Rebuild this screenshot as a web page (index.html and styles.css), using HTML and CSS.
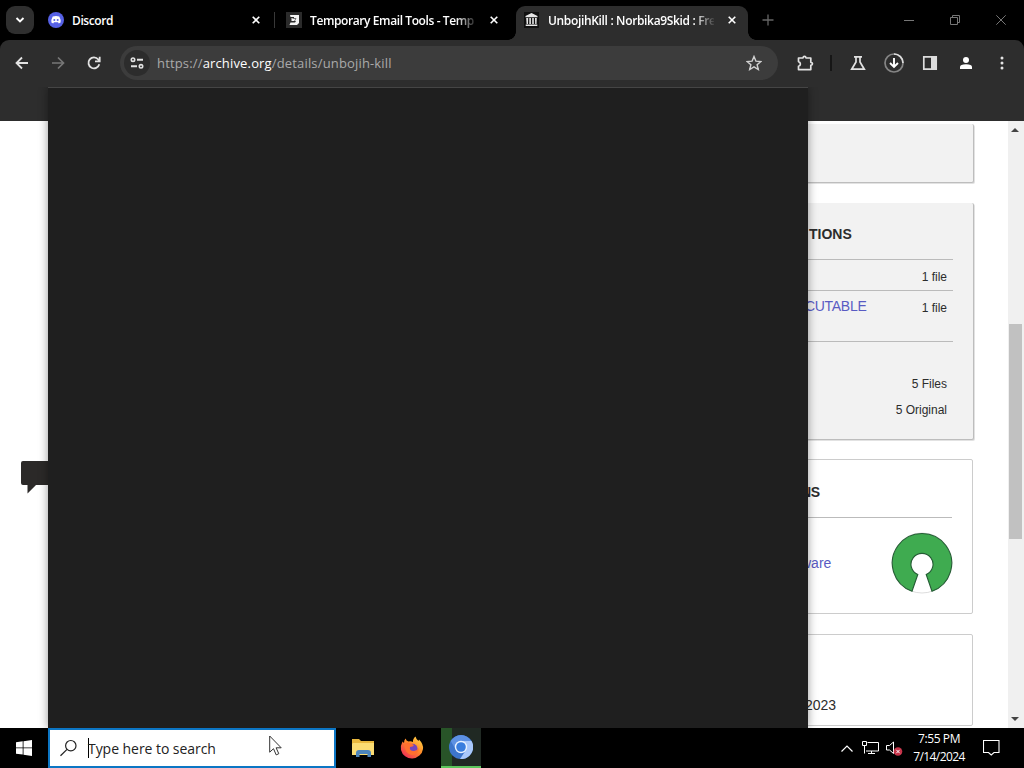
FILE: index.html
```html
<!DOCTYPE html>
<html lang="en">
<head>
<meta charset="utf-8">
<title>UnbojihKill : Norbika9Skid</title>
<link rel="stylesheet" href="styles.css">
</head>
<body>
<div class="desktop">
  <header class="tabstrip">
    <button class="tab-search"><svg width="10" height="6" viewBox="0 0 10 6" class="stroke white"><path d="M1.500 1l3.500 3.500L8.500 1" stroke-width="1.900"/></svg></button>
    <div class="tab tab-discord">
      <svg class="favicon" width="16" height="16" viewBox="0 0 16 16"><circle cx="8" cy="8" r="8" fill="#5661e6"/><path d="M4.700 4.500Q8 3.400 11.300 4.500Q13 7.500 12.600 10.600L10.800 11.500L10 10.300H6L5.200 11.500L3.400 10.600Q3 7.500 4.700 4.500z" fill="#fff"/><circle cx="6.300" cy="8" r="1" fill="#5661e6"/><circle cx="9.700" cy="8" r="1" fill="#5661e6"/></svg>
      <span class="tab-title t1">Discord</span>
      <svg class="close stroke white" width="8" height="8" viewBox="0 0 8 8"><path d="M.7.7l6.600 6.600M7.300.7L.7 7.300" stroke-width="1.600"/></svg>
    </div>
    <i class="tab-divider"></i>
    <div class="tab tab-mail">
      <svg class="favicon" width="16" height="16" viewBox="0 0 16 16"><path d="M0 0h16v16H0z" fill="#2b2b2b"/><path d="M4 3h9v8l-2 2H3.500l1-2.500H9L10 9H5.500V6H8V5H4.500z" fill="#f4f4f4"/><path d="M6.500 6.500H10L8.500 9" fill="none" stroke="#555" stroke-width=".8"/></svg>
      <span class="tab-title t2">Temporary Email Tools - Temp</span>
      <svg class="close stroke white" width="8" height="8" viewBox="0 0 8 8"><path d="M.7.7l6.600 6.600M7.300.7L.7 7.300" stroke-width="1.600"/></svg>
    </div>
    <div class="tab tab-active">
      <svg class="favicon" width="16" height="16" viewBox="0 0 16 16"><path d="M0 0h15v16H0z" fill="#111"/><path d="M1.500 4L7.500 1l6 3v1.200h-12zM2.200 6h2l-.2 6H2.600zM5.300 6h1.600v6H5.300zM8.200 6h1.600v6H8.200zM11 6h1.800l-.3 6h-1.300zM1.700 12.600h11.600V14H1.700z" fill="#e5e5e5"/></svg>
      <span class="tab-title t3">UnbojihKill : Norbika9Skid : Fre</span>
      <svg class="close stroke white" width="8" height="8" viewBox="0 0 8 8"><path d="M.7.7l6.600 6.600M7.300.7L.7 7.300" stroke-width="1.600"/></svg>
    </div>
    <svg class="new-tab stroke" width="12" height="12" viewBox="0 0 12 12"><path d="M6 .5v11M.5 6h11" stroke="#666" stroke-width="1.300"/></svg>
    <div class="window-buttons">
      <svg class="stroke" width="10" height="10" viewBox="0 0 10 10"><path d="M0 5.500h10" stroke="#777"/></svg>
      <svg class="stroke" width="10" height="10" viewBox="0 0 10 10"><path d="M.5 2.500h7v7h-7zM2.500 2.500v-2h7v7h-2" stroke="#777"/></svg>
      <svg class="stroke" width="10" height="10" viewBox="0 0 10 10"><path d="M.3.300l9.400 9.400M9.700.3L.3 9.700" stroke="#777"/></svg>
    </div>
  </header>
  <nav class="toolbar">
    <svg class="stroke light" width="14" height="14" viewBox="0 0 14 14"><path d="M13 7H2M7 1.500L1.500 7 7 12.500" stroke-width="1.800"/></svg>
    <svg class="stroke dim" width="14" height="14" viewBox="0 0 14 14"><path d="M1 7h11M7 1.500L12.500 7 7 12.500" stroke-width="1.700"/></svg>
    <svg class="stroke light" width="14" height="14" viewBox="0 0 14 14"><path d="M12.300 8.300A5.500 5.500 0 1 1 11.300 3.500L12.500 5M12.700.7V5.300H8" stroke-width="1.800"/></svg>
    <div class="omnibox">
      <span class="site-info"><svg class="stroke light" width="14" height="12" viewBox="0 0 14 12"><circle cx="3" cy="2.700" r="1.700" stroke-width="1.600"/><path d="M7 2.700h6M1 9.300h6" stroke-width="1.900"/><circle cx="11" cy="9.300" r="1.700" stroke-width="1.600"/></svg></span>
      <span class="url">https://<b>archive.org</b>/details/unbojih-kill</span>
      <svg class="star stroke" width="16" height="16" viewBox="0 0 16 16"><path d="M8 1.500l1.900 4.600 5 .4-3.800 3.200 1.200 4.800L8 11.900l-4.300 2.600 1.200-4.800L1.100 6.500l5-.4z" stroke="#d0d0d0" stroke-width="1.400"/></svg>
    </div>
    <div class="actions">
      <svg class="puzzle stroke light" width="18" height="18" viewBox="0 0 18 18"><path d="M2.500 4H7Q7.200 2.300 8.500 2.300T10 4H14.800V8.300Q16.500 8.600 16.500 9.800T14.800 11.300V15.600H2.500V12.200Q4.400 11.600 4.400 9.900T2.500 7.600z" stroke-width="1.700" stroke-linejoin="round"/></svg>
      <i class="sep"></i>
      <span class="action"><svg class="stroke light" width="16" height="16" viewBox="0 0 16 16"><path d="M4 1.800h8M6 2v5L1.700 14.200h12.600L10 7V2" stroke-width="1.700"/></svg></span>
      <span class="action"><svg class="stroke" width="20" height="20" viewBox="0 0 20 20"><circle cx="10" cy="10" r="9" stroke="#858585" stroke-width="1.700"/><path d="M10 1a9 9 0 0 1 9 9" stroke="#ddd" stroke-width="1.700"/><path d="M10 5v9M6 10l4 4 4-4" stroke="#fff" stroke-width="1.900"/></svg></span>
      <span class="action"><svg width="16" height="16" viewBox="0 0 16 16"><path d="M1.800 1.800h12.400v12.400H1.800z" fill="none" stroke="#ddd" stroke-width="1.700"/><path d="M9 1h6v14H9z" fill="#ddd"/></svg></span>
      <span class="action"><svg width="14" height="14" viewBox="0 0 14 14" fill="#fff"><circle cx="7" cy="4" r="3"/><path d="M1 13v-2Q1 8.300 7 8.300T13 11v2z"/></svg></span>
      <span class="action"><svg width="4" height="16" viewBox="0 0 4 16" fill="#e4e4e4"><circle cx="2" cy="3" r="1.500"/><circle cx="2" cy="8" r="1.500"/><circle cx="2" cy="13" r="1.500"/></svg></span>
    </div>
  </nav>
  <div class="bookmark-bar"></div>
  <main class="page">
    <svg class="bubble" width="44" height="34" viewBox="0 0 44 34"><path d="M2 0h42v24H15L6.500 32.500V24H2Q0 24 0 22V2Q0 0 2 0z" fill="#2b2928"/></svg>
    <aside class="details">
      <section class="card gray card-top"></section>
      <section class="card gray card-options">
        <h2>TIONS</h2>
        <div class="row r1"><span>1 file</span></div>
        <div class="row r2"><a>CUTABLE</a><span>1 file</span></div>
        <div class="row r3"><span>5 Files</span></div>
        <div class="row r4"><span>5 Original</span></div>
      </section>
      <section class="card card-collections">
        <h2>NS</h2>
        <div class="collection"><a>ware</a>
          <svg width="62" height="62" viewBox="0 0 62 62"><path d="M31 1a30 30 0 1 1 0 60 30 30 0 0 1 0-60" fill="#fff" stroke="#ddd"/><path d="M21 59.200A29.700 29.700 0 1 1 41 59.200L35.200 42.500A11 11 0 1 0 26.800 42.500z" fill="#3fab50" stroke="#255d35" stroke-width="1.100"/></svg>
        </div>
      </section>
      <section class="card card-date"><span>2023</span></section>
    </aside>
    <div class="scrollbar">
      <svg width="8" height="4" viewBox="0 0 8 4"><path d="M0 4l4-4 4 4z" fill="#444"/></svg>
      <i class="thumb"></i>
      <svg width="8" height="4" viewBox="0 0 8 4"><path d="M0 0l4 4 4-4z" fill="#444"/></svg>
    </div>
  </main>
  <footer class="taskbar">
    <div class="start"><svg width="16" height="16" viewBox="0 0 16 16" fill="#fff"><path d="M0 2.300l6.700-1v6.200H0zM7.500 1.200L16 0v7.500H7.500zM0 8.300h6.700v6.300L0 13.700zM7.500 8.300H16V16l-8.500-1.200z"/></svg></div>
    <div class="search">
      <svg class="stroke" width="18" height="18" viewBox="0 0 18 18"><circle cx="10.800" cy="6.700" r="5.200" stroke="#222" stroke-width="1.200"/><path d="M7 10.400L.5 16.700" stroke="#222" stroke-width="1.200"/></svg>
      <i class="caret"></i><span>Type here to search</span>
    </div>
    <div class="task explorer"><svg width="22" height="18" viewBox="0 0 22 18"><path d="M0 0h7l2 2h13v14H0z" fill="#e9b83e"/><path d="M1 4h21v12H0V5z" fill="#fbdc73"/><path d="M4 18v-4q0-3 3-3h9q3 0 3 3v4h-3.500v-3h-8v3z" fill="#4c84bb"/></svg></div>
    <div class="task firefox"><svg width="24" height="24" viewBox="0 0 24 24"><defs><linearGradient id="fire" x1="1" y1="0" x2=".2" y2="1"><stop offset="0" stop-color="#ffe34b"/><stop offset=".5" stop-color="#ff8a29"/><stop offset="1" stop-color="#f02b58"/></linearGradient></defs><path d="M2.500 5.500L4 7Q4 3.500 5.700 2.500Q6 4.800 8.500 5.500Q11 5 13 6Q12.500 3 15.500.5Q16 3 18.500 5L19 3.500Q23.500 8 23 13A11.200 11 0 0 1 1 14Q.3 9.500 2.500 5.500z" fill="url(#fire)"/><circle cx="12.500" cy="12.800" r="5" fill="#7446bd"/><path d="M4 8q4-3 8 0l2 1q-1 2-4 2-1 4 4 4 3 0 5-3-1 7-7 7-7-1-8-11" fill="#ff702f"/></svg></div>
    <div class="task chromium"><svg width="24" height="24" viewBox="0 0 24 24"><circle cx="12" cy="12" r="12" fill="#3d75cb"/><path d="M12 6h10.500A12 12 0 0 1 11 24l6-9z" fill="#a9c8fb"/><path d="M1.700 6A12 12 0 0 1 22.400 6H12L7 15z" fill="#5d91e3"/><circle cx="12" cy="12" r="6.200" fill="#e9f2ff"/><circle cx="12" cy="12" r="4.800" fill="#397dde"/></svg></div>
    <div class="tray">
      <svg class="stroke white" width="12" height="7" viewBox="0 0 12 7"><path d="M.5 6.500L6 1l5.500 5.500" stroke-width="1.200"/></svg>
      <svg class="stroke white" width="17" height="14" viewBox="0 0 17 14"><path d="M5.500 1.500h11v8.500H4M.5.500h4v4h-4zM2.500 4.500v8M6 12.500h7M9.500 10v2.500"/></svg>
      <svg width="17" height="15" viewBox="0 0 17 15"><path d="M.5 4.500h3l4-3.500v11.500L3.500 9h-3z" fill="none" stroke="#fff"/><circle cx="12" cy="10.500" r="4.300" fill="#c73349"/><path d="M10.300 8.800l3.400 3.400M13.700 8.800l-3.400 3.400" stroke="#fff"/></svg>
      <div class="clock"><span>7:55 PM</span><span>7/14/2024</span></div>
      <svg class="stroke white" width="17" height="16" viewBox="0 0 17 16"><path d="M.5.5h15.500v12H11L8.250 15 5.500 12.500h-5z" stroke-width="1.100"/></svg>
    </div>
  </footer>
  <div class="search-panel"></div>
  <svg class="cursor" width="13" height="21" viewBox="0 0 13 21"><path d="M.7 1v16.200l3.800-3.500 2.700 6.200 2.600-1.200-2.700-5.900h5.100z" fill="#fff" stroke="#333"/></svg>
</div>
</body>
</html>
```

FILE: styles.css
```css
* { box-sizing: border-box; }
body { margin: 0; background: #000; overflow: hidden; }
svg { display: block; flex: none; }
button { padding: 0; border: 0; }
.desktop { position: relative; width: 1024px; height: 768px; display: flex; flex-direction: column; overflow: hidden; font-family: "Open Sans", "Noto Sans", sans-serif; }
.stroke { fill: none; }
.white { stroke: #fff; }
.light { stroke: #e2e2e2; }
.dim { stroke: #777; }
.tabstrip { height: 40px; flex: none; display: flex; align-items: center; padding-left: 6px; background: #000; }
.tab-search { width: 28px; height: 28px; display: flex; align-items: center; justify-content: center; background: #2f2f2f; border-radius: 9px; }
.tab { height: 34px; margin-top: 6px; display: flex; align-items: center; padding-bottom: 6px; color: #fff; }
.tab-discord { width: 240px; padding-left: 14px; padding-right: 14px; }
.tab-divider { width: 1px; height: 16px; background: #383838; }
.tab-mail { width: 241px; padding: 0 18px 6px 11px; }
.tab-active { position: relative; width: 232px; padding: 0 12px 6px 8px; background: #2d2d2d; border-radius: 9px 9px 0 0; }
.tab-active::before, .tab-active::after { content: ""; position: absolute; bottom: 0; width: 8px; height: 8px; }
.tab-active::before { left: -8px; background: radial-gradient(circle at 0 0, #000 7.500px, #2d2d2d 8px); }
.tab-active::after { right: -8px; background: radial-gradient(circle at 100% 0, #000 7.500px, #2d2d2d 8px); }
.tab-title { margin-left: 8px; white-space: nowrap; font-size: 12px; font-weight: 600; }
.t1 { letter-spacing: -.4px; }
.t2, .t3 { width: 166px; -webkit-mask-image: linear-gradient(90deg, #000 146px, transparent 168px); }
.t2 { letter-spacing: -.4px; }
.t3 { letter-spacing: -.34px; }
.close { margin-left: auto; }
.new-tab { margin-left: 14px; }
.window-buttons { margin-left: auto; margin-right: 18px; display: flex; gap: 36px; }
.toolbar { height: 46px; flex: none; display: flex; align-items: center; padding-left: 15px; gap: 22px; background: #2d2d2d; border-radius: 9px 9px 0 0; }
.omnibox { width: 658px; height: 34px; display: flex; align-items: center; margin-left: -3px; padding: 0 16px 0 4px; background: #3c3c3c; border-radius: 17px; }
.site-info { width: 26px; height: 26px; display: flex; align-items: center; justify-content: center; background: #2c2c2c; border-radius: 50%; }
.url { margin-left: 7px; color: #aaa; font-size: 13px; letter-spacing: .16px; white-space: nowrap; }
.url b { color: #fff; font-weight: 400; }
.star { margin-left: auto; }
.actions { flex: 1; display: flex; align-items: center; margin-left: -4px; }
.puzzle { margin-right: 16px; }
.sep { width: 2px; height: 16px; margin-right: 8px; background: #161616; }
.action { width: 36px; display: flex; justify-content: center; }
.bookmark-bar { height: 35px; flex: none; background: #2d2d2d; }
.page { height: 607px; flex: none; display: flex; background: #fff; font-family: "Liberation Sans", Arial, sans-serif; }
.bubble { margin: 340px 0 0 21px; }
.details { width: 174px; margin-left: auto; }
.card { width: 173px; margin-bottom: 20px; padding-right: 20px; border: 1px solid #ccc; border-radius: 2px; overflow: hidden; color: #2c2c2c; }
.gray { width: 174px; padding-right: 20px; background: #f2f2f2; border: 0; border-right: 1px solid #bdbdbd; border-bottom: 1px solid #bdbdbd; box-shadow: 1px 1px 0 #e2e2e2; }
.card-top { height: 59px; margin-top: 3px; }
.card-options { height: 237px; margin-bottom: 19px; }
.card-collections { height: 155px; }
.card-date { height: 92px; margin: 0; }
h2 { margin: 0; height: 57px; padding: 23px 0 0 9px; border-bottom: 1px solid #bbb; font-size: 14px; line-height: 17px; letter-spacing: 0; }
.card-collections h2 { height: 58px; padding: 24px 0 0; letter-spacing: -.3px; }
.row { display: flex; justify-content: space-between; padding: 0 6px 0 5px; font-size: 12px; line-height: 14px; }
.row span { margin-left: auto; }
a { color: #595bc3; font-size: 14px; }
.r1 { height: 31px; padding-top: 10px; border-bottom: 1px solid #bbb; }
.r2 { height: 51px; padding-top: 9px; border-bottom: 1px solid #bbb; }
.r2 a { line-height: 13px; letter-spacing: -.3px; }
.r2 span { padding-top: 1px; }
.r3 { padding-top: 35px; }
.r4 { padding-top: 12px; }
.collection { height: 89px; display: flex; align-items: center; justify-content: space-between; margin-right: -1px; }
.card-date span { display: block; padding: 62px 0 0 4px; font-size: 14px; line-height: 16px; }
.scrollbar { width: 16px; margin-left: 34px; padding: 7px 2px 7px 0; display: flex; flex-direction: column; align-items: center; background: #f0f0f0; }
.thumb { width: 13px; height: 215px; margin: 192px 0 auto; background: #c1c1c1; }
.taskbar { height: 40px; flex: none; display: flex; align-items: center; background: #000; color: #fff; }
.start { width: 48px; padding-left: 16px; }
.search { width: 288px; height: 40px; display: flex; align-items: center; padding-left: 10px; background: #fff; border: 2px solid #0c76c4; color: #222; font-size: 14px; letter-spacing: -.05px; white-space: nowrap; }
.caret { width: 1px; height: 20px; margin-left: 10px; background: #000; }
.search span { margin-left: -1px; }
.task { width: 40px; height: 40px; display: flex; align-items: center; justify-content: center; }
.explorer { margin-left: 7px; }
.firefox { margin: 0 9px; }
.chromium { border-bottom: 2px solid #5cc65c; background: linear-gradient(90deg, #285428 11px, #202923 11px); }
.tray { margin-left: auto; margin-right: 24px; display: flex; align-items: center; }
.tray > svg:nth-child(2) { margin-left: 9px; }
.tray > svg:nth-child(3) { margin-left: 7px; }
.clock { width: 56px; margin: 0 16px 0 8px; display: flex; flex-direction: column; align-items: center; font-size: 12px; line-height: 18px; letter-spacing: -.6px; white-space: nowrap; }
.clock span:first-child { letter-spacing: -.4px; }
.search-panel { position: absolute; left: 48px; top: 87px; width: 760px; height: 641px; background: #1f1f1f; border-top: 1px solid #454545; box-shadow: 0 0 9px rgba(0, 0, 0, .4); clip-path: inset(0 -12px 0 -12px); }
.cursor { position: absolute; left: 269px; top: 735px; }
```
